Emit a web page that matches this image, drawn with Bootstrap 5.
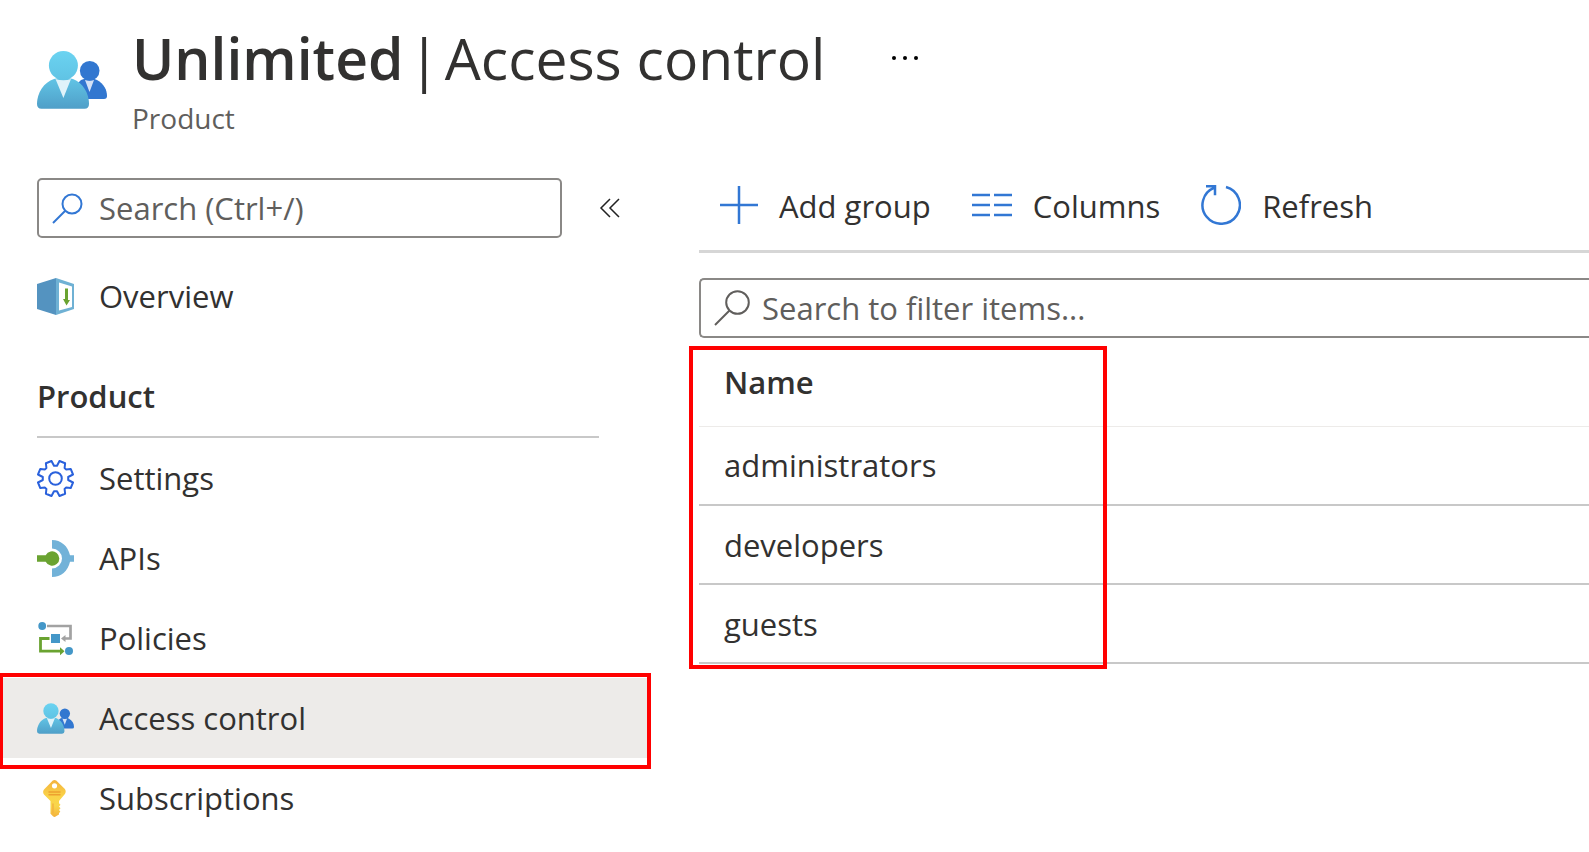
<!DOCTYPE html>
<html lang="en">
<head>
<meta charset="utf-8">
<meta name="viewport" content="width=device-width, initial-scale=1">
<title>Unlimited | Access control</title>
<link href="https://cdn.jsdelivr.net/npm/bootstrap@5.3.0/dist/css/bootstrap.min.css" rel="stylesheet">
<style>
  body { font-family: "Open Sans", "Noto Sans", sans-serif; font-size: 31px; line-height: 40px; color: #323130; overflow-x: hidden; }
  .blade-header { padding: 22px 0 0 37px; gap: 25px; }
  .blade-icon { width: 70px; height: 58px; margin-top: 29px; }
  .blade-title { font-size: 57px; line-height: 72px; font-weight: 400; gap: 5px; }
  .blade-title strong { font-weight: 600; }
  .blade-type { font-size: 28px; line-height: 48px; color: #605e5c; }
  .more-btn { margin-left: 66px; line-height: 0; }
  .side-pane { width: 647px; padding-top: 36px; }
  .main-pane { padding: 29px 0 0 52px; min-width: 0; }
  .plain-btn { border: 0; background: none; padding: 0; color: inherit; }
  .search-box { border: 2px solid #8a8886; border-radius: 5px; height: 60px; background: #fff; }
  .search-box input { border: 0; outline: 0; padding: 0; background: none; color: inherit; min-width: 0; }
  .search-box input::placeholder { color: #605e5c; opacity: 1; }
  .side-top { padding-left: 37px; margin-bottom: 18px; }
  .side-search { width: 525px; padding-left: 13px; gap: 16px; }
  .filter-search { border-right: 0; border-radius: 5px 0 0 5px; padding-left: 13px; gap: 12px; margin-top: 25px; }
  .menu-link { height: 80px; padding-left: 37px; gap: 25px; color: inherit; text-decoration: none; }
  .menu-link svg { width: 37px; height: 37px; flex: none; }
  .menu-link.active { background: #edebe9; }
  .menu-heading { font-size: 31px; line-height: 40px; font-weight: 600; margin: 0 48px 0 37px; padding: 40px 0 20px; border-bottom: 2px solid #c8c8c8; }
  .toolbar { height: 82px; border-bottom: 3px solid #d6d6d6; padding: 0 0 9px 21px; gap: 41px; }
  .toolbar button { gap: 21px; }
  .toolbar svg { margin-bottom: 3px; stroke: #3277d4; stroke-width: 2.500; }
  .group-table { margin: 7px 0 0; color: inherit; }
  .group-table th, .group-table td { height: 79px; padding: 0 0 0 25px; vertical-align: middle; border-bottom: 2px solid #c8c8c8; color: inherit; }
  .group-table th { height: 81px; padding-bottom: 6px; font-weight: 600; border-bottom: 1px solid #edebe9; }
  .callout { position: absolute; border: 4px solid #f00; pointer-events: none; }
  .callout-menu { top: -5px; right: -4px; bottom: -11px; left: -1px; }
  .callout-groups { top: 1px; bottom: -5px; left: -10px; width: 418px; }
</style>
</head>
<body>
<svg width="0" height="0" class="position-absolute" aria-hidden="true">
  <defs>
    <linearGradient id="person" x1="0" y1="0" x2="0" y2="1"><stop offset="0" stop-color="#62c5e6"/><stop offset="1" stop-color="#4f9fc8"/></linearGradient>
    <linearGradient id="face" x1="0" y1="0" x2="0" y2="1"><stop offset="0" stop-color="#6bd3f1"/><stop offset="1" stop-color="#60c3e4"/></linearGradient>
    <linearGradient id="gold" x1="0" y1="0" x2="0" y2="1"><stop offset="0" stop-color="#f3b23d"/><stop offset=".45" stop-color="#fad449"/><stop offset=".7" stop-color="#f9d64b"/><stop offset="1" stop-color="#f3b13c"/></linearGradient>
    <symbol id="people" viewBox="0 0 70 58">
      <path d="M44 29q9-4 16 0c7 4 10 10 10 16q0 3-3 3H40V33z" fill="#3277d0"/>
      <path d="M48 29q4.500 1.500 9 0l-4.500 12z" fill="#d5e2f6"/>
      <circle cx="52.700" cy="19.700" r="9.800" fill="#3277d0"/>
      <path d="M17 28q9-3 19 0c10 4 16 14 16 25q0 4.700-4.500 4.700h-43Q0 57.700 0 53c0-11 7-22 17-25z" fill="url(#person)"/>
      <path d="M18.500 28q8 2.500 15.500 0l-7.600 19z" fill="#e0f3fa"/>
      <circle cx="26.400" cy="14.600" r="14.500" fill="url(#face)"/>
    </symbol>
  </defs>
</svg>

<header class="blade-header d-flex align-items-start">
  <svg class="blade-icon flex-shrink-0" aria-hidden="true"><use href="#people"/></svg>
  <div>
    <div class="d-flex align-items-center">
      <h1 class="blade-title d-flex mb-0"><strong>Unlimited</strong><span>|</span><span>Access control</span></h1>
      <button type="button" class="plain-btn more-btn" aria-label="More">
        <svg width="28" height="6" viewBox="0 0 28 6"><circle cx="3" cy="3" r="2"/><circle cx="14" cy="3" r="2"/><circle cx="25" cy="3" r="2"/></svg>
      </button>
    </div>
    <div class="blade-type">Product</div>
  </div>
</header>

<div class="d-flex">
  <aside class="side-pane flex-shrink-0">
    <div class="side-top d-flex align-items-center">
      <div class="search-box side-search d-flex align-items-center">
        <svg width="31" height="31" viewBox="0 0 31 31" fill="none" stroke="#3277d4" stroke-width="2" aria-hidden="true"><circle cx="20" cy="11" r="9.500"/><path d="M13 18 1 30"/></svg>
        <input type="text" class="flex-grow-1" placeholder="Search (Ctrl+/)" aria-label="Search menu">
      </div>
      <button type="button" class="plain-btn ms-auto me-4 d-flex" aria-label="Collapse menu">
        <svg width="24" height="20" viewBox="0 0 24 20" fill="none" stroke="#222" stroke-width="1.500"><path d="M11 1 2 10l9 9M20 1l-9 9 9 9"/></svg>
      </button>
    </div>
    <nav>
      <a href="#" class="menu-link d-flex align-items-center">
        <svg viewBox="0 0 37 37" aria-hidden="true"><path d="M19 0 0 6v25l19 6z" fill="#5493c0"/><path d="m19 0 18 6v25l-18 6z" fill="#6fb1d4"/><path d="m22 4.500 13 4V29l-13 3.500z" fill="#fff"/><path d="M28 10.500h3V22h2l-3.500 5.500L26 21h2z" fill="#6aa331"/></svg>
        Overview
      </a>
      <h2 class="menu-heading">Product</h2>
      <a href="#" class="menu-link d-flex align-items-center">
        <svg viewBox="-18.500 -18.500 37 37" fill="none" stroke="#2a61dc" stroke-width="2" stroke-linejoin="round" aria-hidden="true"><circle r="6.300"/><path d="M1.500-12.700 4-17.500l5.600 2.300-.5 4.700 1.400 1.400 4.700-.5L17.500-4l-4.800 2.500v3L17.500 4l-2.300 5.600-4.700-.5-1.400 1.400.5 4.700L4 17.500l-2.500-4.800h-3L-4 17.500l-5.600-2.300.5-4.700-1.400-1.400-4.700.5L-17.500 4l4.800-2.500v-3L-17.500-4l2.300-5.600 4.700.5 1.400-1.400-.5-4.700L-4-17.500l2.500 4.800z"/></svg>
        Settings
      </a>
      <a href="#" class="menu-link d-flex align-items-center">
        <svg viewBox="0 0 37 37" aria-hidden="true"><path d="M15 0c9 0 16 6 18 15.300h4v6.400h-4C31 31 24 37 15 37v-8.500a10 10 0 0 0 0-20z" fill="#72b2d8"/><path d="M0 15.300h8.700a7.200 7.200 0 1 1 0 6.400H0z" fill="#6aa331"/></svg>
        APIs
      </a>
      <a href="#" class="menu-link d-flex align-items-center">
        <svg viewBox="0 0 37 37" aria-hidden="true"><path d="M10 6h23.500v12.500H28" fill="none" stroke="#a2a2a2" stroke-width="2.700"/><path d="m24 18.500 4.500-3.500v7z" fill="#a2a2a2"/><path d="M12.500 18.500H3.500v12.700h21" fill="none" stroke="#6aa331" stroke-width="2.800"/><path d="m27.500 31.200-4.500-4v8z" fill="#6aa331"/><path d="M14 14h9v9h-9z" fill="#4497c8"/><circle cx="5.200" cy="6" r="3.900" fill="#4497c8"/><circle cx="32" cy="31" r="4" fill="#4497c8"/></svg>
        Policies
      </a>
      <div class="position-relative">
        <a href="#" class="menu-link active d-flex align-items-center" aria-current="page">
          <svg aria-hidden="true"><use href="#people"/></svg>
          Access control
        </a>
        <div class="callout callout-menu"></div>
      </div>
      <a href="#" class="menu-link d-flex align-items-center">
        <svg viewBox="0 0 37 37" aria-hidden="true"><path d="M15.800.600q1.700-1.200 3.400 0l8.700 8.500q1.600 2.400 0 5L22 21v2.300l1.500 1.400-1.500 1.800 1.500 1.700-1.500 1.800 1.300 1.500-1.300 1.800v1.100L19 36.300q-1.500 1.300-3 0l-2.500-2.500V21L7 14.500q-1.800-2.600 0-5z" fill="url(#gold)"/><circle cx="17.500" cy="5.800" r="2.600" fill="#fff"/><path d="M11.500 12h12M11.500 14.800h12" stroke="#eda12f" stroke-width="1.600"/><path d="M16 23.500v10" stroke="#f3b540" stroke-width="1.600"/></svg>
        Subscriptions
      </a>
    </nav>
  </aside>

  <main class="main-pane flex-grow-1">
    <div class="toolbar d-flex align-items-center">
      <button type="button" class="plain-btn d-flex align-items-center">
        <svg width="38" height="38" viewBox="0 0 38 38" aria-hidden="true"><path d="M0 19h38M19 0v38"/></svg>
        Add group
      </button>
      <button type="button" class="plain-btn d-flex align-items-center">
        <svg width="40" height="24" viewBox="0 0 40 24" aria-hidden="true"><path d="M0 2h18M22 2h18M0 12h18M22 12h18M0 22h18M22 22h18"/></svg>
        Columns
      </button>
      <button type="button" class="plain-btn d-flex align-items-center">
        <svg width="40" height="40" viewBox="0 0 40 40" fill="none" aria-hidden="true"><path d="M25 2A18.700 18.700 0 1 1 13.500 2.600M5 1.300h9v9"/></svg>
        Refresh
      </button>
    </div>
    <div class="search-box filter-search d-flex align-items-center">
      <svg width="36" height="36" viewBox="0 0 36 36" fill="none" stroke="#605e5c" stroke-width="2" aria-hidden="true"><circle cx="23.500" cy="12.500" r="11.300"/><path d="M15.500 20.500 1 35"/></svg>
      <input type="text" class="flex-grow-1" placeholder="Search to filter items..." aria-label="Filter items">
    </div>
    <div class="position-relative">
      <table class="table group-table">
        <thead><tr><th scope="col">Name</th></tr></thead>
        <tbody>
          <tr><td>administrators</td></tr>
          <tr><td>developers</td></tr>
          <tr><td>guests</td></tr>
        </tbody>
      </table>
      <div class="callout callout-groups"></div>
    </div>
  </main>
</div>
<script src="https://cdn.jsdelivr.net/npm/bootstrap@5.3.0/dist/js/bootstrap.bundle.min.js"></script>
</body>
</html>
